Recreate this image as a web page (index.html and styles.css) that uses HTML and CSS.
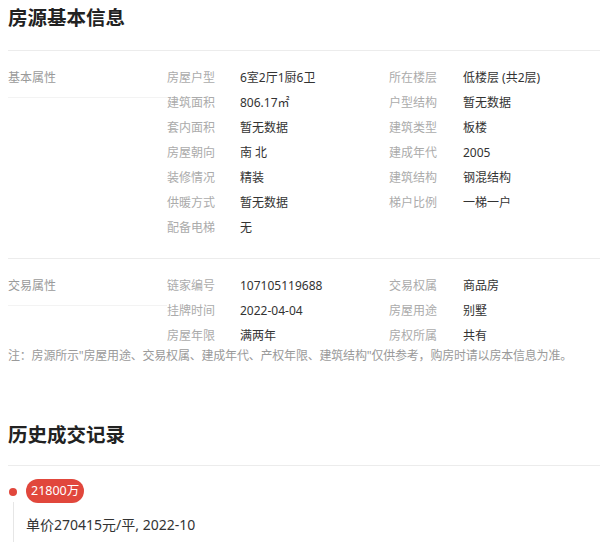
FILE: index.html
```html
<!DOCTYPE html>
<html lang="zh-CN">
<head>
<meta charset="utf-8">
<title>房源基本信息</title>
<link rel="stylesheet" href="styles.css">
</head>
<body>
<div class="page">
  <h2 class="block-title">房源基本信息</h2>

  <div class="attr-section">
    <div class="attr-name">基本属性</div>
    <div class="attr-grid">
      <span class="lbl">房屋户型</span><span class="val">6室2厅1厨6卫</span>
      <span class="lbl">所在楼层</span><span class="val">低楼层 (共2层)</span>
      <span class="lbl">建筑面积</span><span class="val">806.17㎡</span>
      <span class="lbl">户型结构</span><span class="val">暂无数据</span>
      <span class="lbl">套内面积</span><span class="val">暂无数据</span>
      <span class="lbl">建筑类型</span><span class="val">板楼</span>
      <span class="lbl">房屋朝向</span><span class="val">南 北</span>
      <span class="lbl">建成年代</span><span class="val">2005</span>
      <span class="lbl">装修情况</span><span class="val">精装</span>
      <span class="lbl">建筑结构</span><span class="val">钢混结构</span>
      <span class="lbl">供暖方式</span><span class="val">暂无数据</span>
      <span class="lbl">梯户比例</span><span class="val">一梯一户</span>
      <span class="lbl">配备电梯</span><span class="val">无</span>
    </div>
  </div>

  <div class="attr-section trade">
    <div class="attr-name">交易属性</div>
    <div class="attr-grid">
      <span class="lbl">链家编号</span><span class="val">107105119688</span>
      <span class="lbl">交易权属</span><span class="val">商品房</span>
      <span class="lbl">挂牌时间</span><span class="val">2022-04-04</span>
      <span class="lbl">房屋用途</span><span class="val">别墅</span>
      <span class="lbl">房屋年限</span><span class="val">满两年</span>
      <span class="lbl">房权所属</span><span class="val">共有</span>
    </div>
  </div>

  <p class="note">注：房源所示"房屋用途、交易权属、建成年代、产权年限、建筑结构"仅供参考，购房时请以房本信息为准。</p>

  <h2 class="block-title history-title">历史成交记录</h2>

  <div class="timeline">
    <div class="tl-item">
      <div class="tl-rail">
        <span class="tl-dot"></span>
        <span class="tl-line"></span>
      </div>
      <div class="tl-body">
        <span class="price-pill">21800万</span>
        <div class="unit-price">单价270415元/平, 2022-10</div>
      </div>
    </div>
  </div>
</div>
</body>
</html>
```

FILE: styles.css
```css
* {
  box-sizing: border-box;
}

html, body {
  margin: 0;
  padding: 0;
  background: #ffffff;
}

body {
  font-family: "Noto Sans", "Noto Sans CJK SC", sans-serif;
  color: #333333;
  overflow: hidden;
}

.page {
  padding-left: 8px;
  width: 600px;
}

.block-title {
  margin: 0;
  padding: 4px 0 18px 0;
  font-size: 19.5px;
  line-height: 28px;
  font-weight: 700;
  color: #222222;
  border-bottom: 1px solid #ececec;
}

.attr-section {
  display: flex;
  align-items: flex-start;
  padding: 14px 0 18px 0;
  border-bottom: 1px solid #ececec;
}

.attr-section.trade {
  border-bottom: none;
  padding-bottom: 0;
}

.attr-name {
  width: 159px;
  flex: none;
  font-size: 12px;
  line-height: 25px;
  padding-bottom: 7px;
  color: #9a9a9a;
  border-bottom: 1px solid #f3f3f3;
}

.attr-grid {
  flex: 1;
  display: grid;
  grid-template-columns: 73px 149px 74px 1fr;
  grid-auto-rows: 25px;
  font-size: 12px;
  line-height: 25px;
}

.lbl {
  color: #ababab;
}

.val {
  color: #333333;
  white-space: nowrap;
}

.note {
  margin: 0;
  font-size: 12px;
  line-height: 16px;
  letter-spacing: -0.2px;
  color: #9a9a9a;
  white-space: nowrap;
}

.history-title {
  margin-top: 57px;
  padding-top: 0;
  padding-bottom: 16px;
}

.timeline {
  padding-top: 13px;
}

.tl-item {
  display: flex;
  align-items: stretch;
}

.tl-rail {
  width: 18px;
  flex: none;
  display: flex;
  flex-direction: column;
  align-items: flex-start;
}

.tl-dot {
  width: 8px;
  height: 8px;
  margin: 9px 0 0 1px;
  border-radius: 50%;
  background: #e1473c;
}

.tl-line {
  flex: 1;
  width: 1px;
  margin: 6px 0 0 4.5px;
  background: #e6e6e6;
}

.tl-body {
  display: flex;
  flex-direction: column;
  align-items: flex-start;
}

.price-pill {
  height: 24px;
  line-height: 24px;
  padding: 0 5px;
  border-radius: 12px;
  background: #e1473c;
  color: #ffffff;
  font-size: 12.5px;
}

.unit-price {
  margin-top: 12px;
  font-size: 14px;
  line-height: 20px;
  color: #333333;
  padding-bottom: 20px;
}
```
